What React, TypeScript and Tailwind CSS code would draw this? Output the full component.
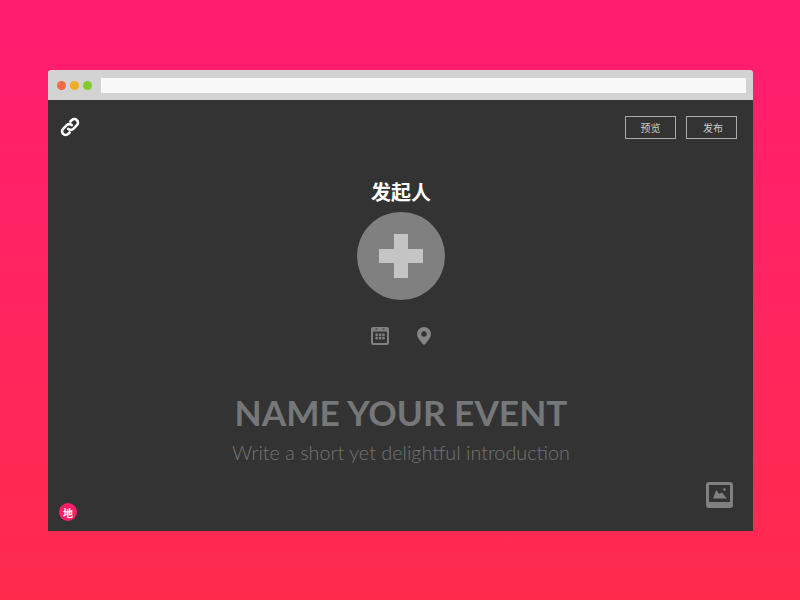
import React from 'react'

const CalendarIcon = () => (
  <svg width="18" height="18" viewBox="0 0 18 18" className="block">
    <path
      fillRule="evenodd"
      d="M2 0h14a2 2 0 0 1 2 2v14a2 2 0 0 1-2 2H2a2 2 0 0 1-2-2V2a2 2 0 0 1 2-2zM2 4.500v10.700a.8.8 0 0 0 .8.8h12.400a.8.8 0 0 0 .8-.8V4.500z"
      fill="#808080"
    />
    <rect x="4.500" y="1.500" width="2" height="1" fill="#333" />
    <rect x="11.500" y="1.500" width="2" height="1" fill="#333" />
    {[4.500, 7.900, 11.300].map((x) =>
      [6.500, 9.800].map((y) => (
        <rect key={`${x}-${y}`} x={x} y={y} width="2.400" height="2.600" fill="#808080" />
      ))
    )}
  </svg>
)

const PinIcon = () => (
  <svg width="14" height="18" viewBox="0 0 14 18" className="block">
    <path
      fillRule="evenodd"
      d="M7 0a7 7 0 0 1 7 7c0 3.800-4.200 8.200-7 11C4.200 15.200 0 10.800 0 7a7 7 0 0 1 7-7zm0 4.200a2.800 2.800 0 1 0 0 5.600 2.800 2.800 0 0 0 0-5.600z"
      fill="#858585"
    />
  </svg>
)

const PictureIcon = () => (
  <svg width="27" height="26" viewBox="0 0 27 26" className="block">
    <path
      fillRule="evenodd"
      d="M3 0h21a3 3 0 0 1 3 3v20a3 3 0 0 1-3 3H3a3 3 0 0 1-3-3V3a3 3 0 0 1 3-3zm0 3v17h21V3z"
      fill="#808080"
    />
    <path d="M7 16.500l3.300-8.500 3 4 2.700-1.500 5 6z" fill="#808080" />
    <circle cx="18.500" cy="7.500" r="1.300" fill="#808080" />
  </svg>
)

const LinkIcon = () => (
  <svg width="20" height="20" viewBox="0 0 20 20" fill="none" stroke="#fff" strokeWidth="2.600" strokeLinecap="round" strokeLinejoin="round" className="block">
    <path d="M8.200 11.800a3.600 3.600 0 0 0 5.100 0l3.600-3.600a3.600 3.600 0 0 0-5.100-5.100L10.400 4.500" />
    <path d="M11.800 8.200a3.600 3.600 0 0 0-5.100 0l-3.600 3.600a3.600 3.600 0 0 0 5.100 5.100l1.400-1.400" />
  </svg>
)

const cjk = "font-['Noto_Sans_CJK_SC',sans-serif]"

export default function App() {
  return (
    <div className="w-[800px] h-[600px] overflow-hidden pt-[70px] pl-[48px] bg-gradient-to-b from-[#ff1c71] to-[#ff2a4c]">
      <div className="w-[705px] h-[461px] flex flex-col">
        {/* Browser chrome */}
        <div className="h-[30px] shrink-0 flex items-center pl-[9px] pr-[7px] bg-[#d3d3d3] rounded-t-[3px]">
          <div className="flex gap-[4px]">
            <span className="w-[9px] h-[9px] rounded-full bg-[#f26b43]" />
            <span className="w-[9px] h-[9px] rounded-full bg-[#efab21]" />
            <span className="w-[9px] h-[9px] rounded-full bg-[#83ca2b]" />
          </div>
          <div className="ml-[9px] flex-1 h-[15px] bg-[#f8f8f8]" />
        </div>

        {/* Editor */}
        <div className="flex-1 flex flex-col bg-[#333333]">
          <div className="flex justify-between pt-4 pl-[13px] pr-4">
            <div className="-ml-[1px] pt-[1px]">
              <LinkIcon />
            </div>
            <div className={`flex gap-[10px] ${cjk}`}>
              <button className="w-[51px] h-[23px] border border-[#aaa] text-[10px] text-[#ccc]">预览</button>
              <button className="w-[51px] h-[23px] border border-[#aaa] pl-[3px] text-[10px] text-[#ccc]">发布</button>
            </div>
          </div>

          <div className="flex flex-col items-center pl-[1px]">
            <h2 className={`mt-[39px] text-[20px] leading-[28px] font-bold text-white ${cjk}`}>发起人</h2>
            <div className="mt-[6px] w-[88px] h-[88px] rounded-full bg-[#808080] flex items-center justify-center">
              <svg width="44" height="44" viewBox="0 0 44 44" className="block">
                <path d="M15 0h14v15h15v14H29v15H15V29H0V15h15z" fill="#c4c4c4" />
              </svg>
            </div>
            <div className="mt-[27px] flex items-center gap-7">
              <CalendarIcon />
              <PinIcon />
            </div>
            <h1 className="mt-[46px] text-[35.25px] leading-[44px] font-bold text-[#767778] font-['Lato',sans-serif]">NAME YOUR EVENT</h1>
            <p className="mt-[3px] text-[19.8px] leading-[28px] font-light text-[#747474] font-['Lato',sans-serif]">Write a short yet delightful introduction</p>
          </div>

          <div className="mt-auto flex justify-between items-end pl-[11px] pr-5 pb-[10px]">
            <div className={`w-[18px] h-[18px] rounded-full bg-[#ff1f66] flex items-center justify-center text-[10px] font-bold text-white ${cjk}`}>
              地
            </div>
            <div className="pb-[13px]">
              <PictureIcon />
            </div>
          </div>
        </div>
      </div>
    </div>
  )
}
